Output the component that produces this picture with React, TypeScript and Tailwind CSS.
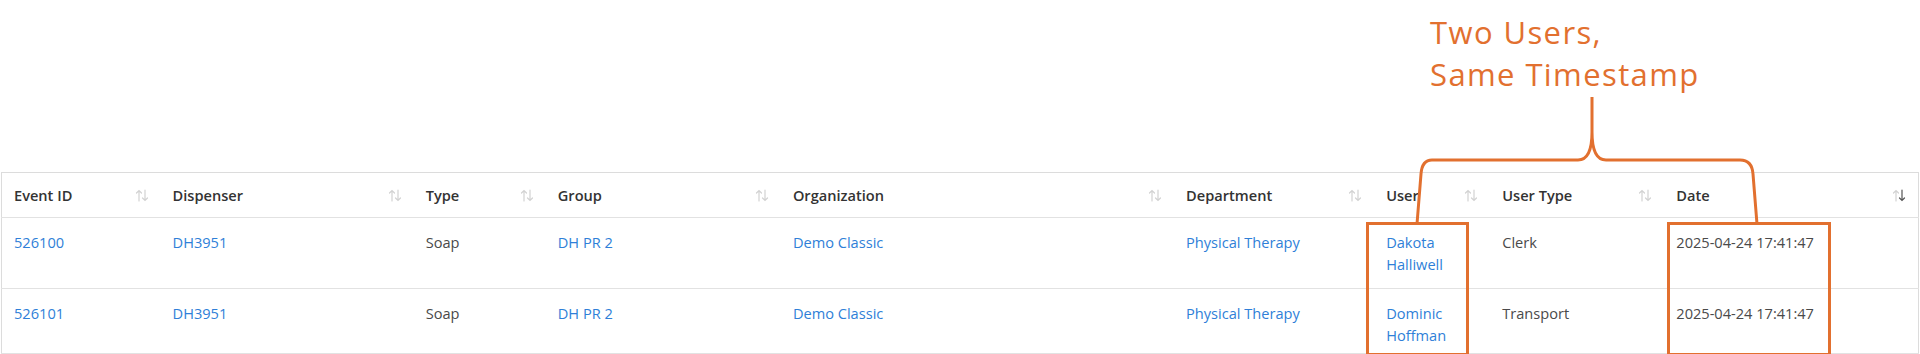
import { useState } from 'react';

type Row = {
  id: string;
  dispenser: string;
  type: string;
  group: string;
  org: string;
  dept: string;
  user: string[];
  userType: string;
  date: string;
};

const rows: Row[] = [
  {
    id: '526100',
    dispenser: 'DH3951',
    type: 'Soap',
    group: 'DH PR 2',
    org: 'Demo Classic',
    dept: 'Physical Therapy',
    user: ['Dakota', 'Halliwell'],
    userType: 'Clerk',
    date: '2025-04-24 17:41:47',
  },
  {
    id: '526101',
    dispenser: 'DH3951',
    type: 'Soap',
    group: 'DH PR 2',
    org: 'Demo Classic',
    dept: 'Physical Therapy',
    user: ['Dominic', 'Hoffman'],
    userType: 'Transport',
    date: '2025-04-24 17:41:47',
  },
];

const columns = [
  { label: 'Event ID', width: 'w-[159px]' },
  { label: 'Dispenser', width: 'w-[253px]' },
  { label: 'Type', width: 'w-[132px]' },
  { label: 'Group', width: 'w-[235px]' },
  { label: 'Organization', width: 'w-[393px]' },
  { label: 'Department', width: 'w-[200px]' },
  { label: 'User', width: 'w-[116px]' },
  { label: 'User Type', width: 'w-[174px]' },
  { label: 'Date', width: 'w-[254px]' },
];

function SortIcon({ active }: { active?: boolean }) {
  return (
    <svg width="14" height="13" viewBox="0 0 14 13" fill="none" strokeWidth="1.2" strokeLinecap="round">
      <g stroke="#d2d2d2">
        <path d="M4 12V1.5M1.5 4L4 1.5 6.5 4" />
      </g>
      <g stroke={active ? '#555555' : '#d2d2d2'}>
        <path d="M10 1v10.5M7.5 9L10 11.5 12.5 9" />
      </g>
    </svg>
  );
}

export default function App() {
  const [sortCol] = useState(8);

  return (
    <div className="relative w-[1920px] h-[354px] overflow-hidden bg-white" style={{ fontFamily: '"Open Sans", Lato, sans-serif' }}>
      {/* Callout label */}
      <div className="absolute left-[1430px] top-[11px] text-[31px] leading-[42px] tracking-[1.4px] text-[#e2702f] font-normal">
        <div>Two Users,</div>
        <div>Same Timestamp</div>
      </div>

      <div className="pt-[172px] pl-px pr-[1px]">
        <table className="w-full table-fixed border-collapse border border-[#dcdcdc] text-[14.6px] leading-[22px]">
          <colgroup>
            {columns.map((c) => (
              <col key={c.label} className={c.width} />
            ))}
          </colgroup>
          <thead>
            <tr className="border-b border-[#e2e2e2]">
              {columns.map((c, i) => (
                <th key={c.label} className="px-3 py-[11px] text-left font-semibold text-[#333333]">
                  <div className="flex items-center justify-between">
                    <span>{c.label}</span>
                    <SortIcon active={i === sortCol} />
                  </div>
                </th>
              ))}
            </tr>
          </thead>
          <tbody>
            {rows.map((r, idx) => {
              const pad = idx === rows.length - 1 ? 'pt-[13px] pb-[7px]' : 'py-[13px]';
              const link = `px-3 ${pad} align-top text-[#2f7fd8]`;
              const plain = `px-3 ${pad} align-top text-[#4a4a4a]`;
              return (
                <tr key={r.id} className="border-b border-[#e2e2e2]">
                  <td className={link}>{r.id}</td>
                  <td className={link}>{r.dispenser}</td>
                  <td className={plain}>{r.type}</td>
                  <td className={link}>{r.group}</td>
                  <td className={link}>{r.org}</td>
                  <td className={link}>{r.dept}</td>
                  <td className={link}>
                    {r.user[0]}
                    <br />
                    {r.user[1]}
                  </td>
                  <td className={plain}>{r.userType}</td>
                  <td className={plain}>{r.date}</td>
                </tr>
              );
            })}
          </tbody>
        </table>
      </div>

      {/* Highlight boxes */}
      <div className="absolute left-[1366px] top-[222px] w-[103px] h-[134px] border-[3px] border-[#e2702f]" />
      <div className="absolute left-[1667px] top-[222px] w-[164px] h-[134px] border-[3px] border-[#e2702f]" />

      {/* Brace */}
      <svg className="absolute left-0 top-0 pointer-events-none" width="1920" height="354" fill="none">
        <path
          d="M1592 97V132Q1592 160 1578 160H1432Q1422 160 1421 174L1417 224M1592 132Q1592 160 1606 160H1740Q1752 160 1753 174L1757 224"
          stroke="#e2702f"
          strokeWidth="3"
          strokeLinejoin="round"
        />
      </svg>
    </div>
  );
}
